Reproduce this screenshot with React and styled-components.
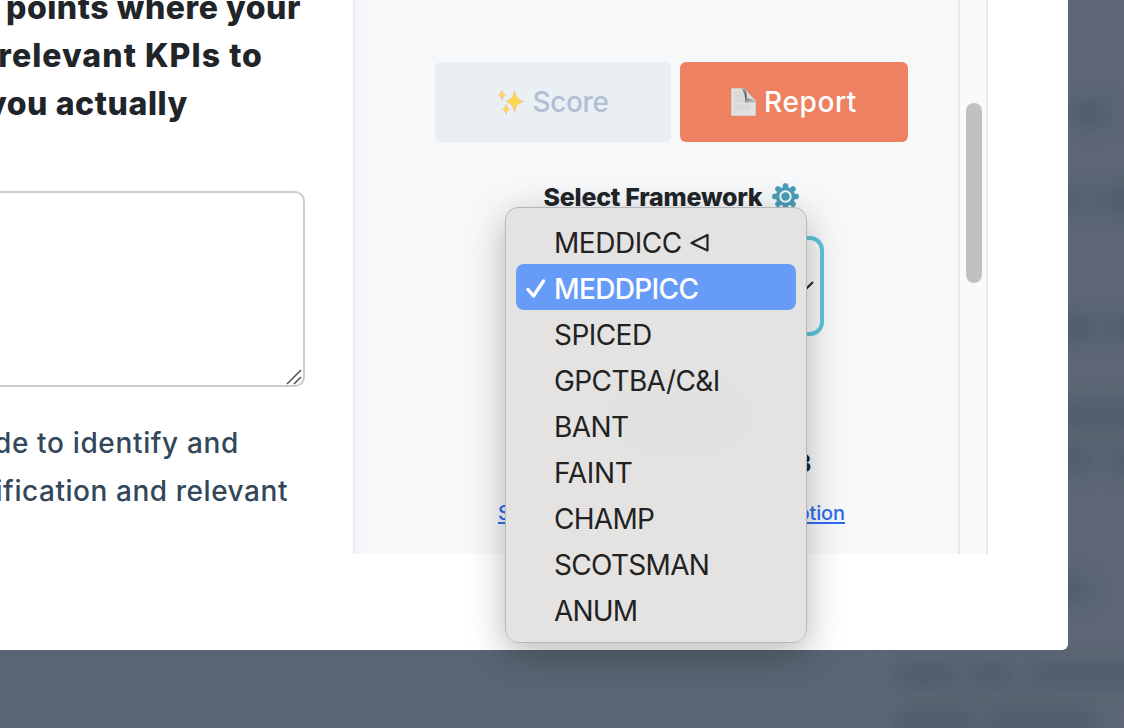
import React from "react";
import styled, { createGlobalStyle, css } from "styled-components";

const Global = createGlobalStyle`
  * { box-sizing: border-box; }
  body { margin: 0; font-family: Inter, "Noto Sans", sans-serif; }
`;

const Page = styled.main`
  position: relative;
  width: 1124px;
  height: 728px;
  overflow: hidden;
  background: #5c6674;
`;

const Smudge = styled.span`
  position: absolute;
  left: ${(p) => p.$x}px;
  top: ${(p) => p.$y}px;
  width: ${(p) => p.$w}px;
  height: ${(p) => p.$h || 20}px;
  border-radius: 10px;
  background: ${(p) => p.$color || "#4d5a68"};
  filter: blur(10px);
`;

const Modal = styled.section`
  position: relative;
  display: grid;
  grid-template-columns: 353px 635px;
  width: 1068px;
  height: 650px;
  background: #fff;
  border-radius: 0 0 6px 0;
`;

const Article = styled.div`
  display: flex;
  flex-direction: column;
  overflow: hidden;
`;

const Heading = styled.h2`
  margin: -16px 0 0;
  height: 144px;
  color: #212529;
  font-size: 32px;
  font-weight: 800;
  line-height: 48px;
`;

const Copy = styled.p`
  margin: 32px 0 0;
  color: #33475b;
  font-size: 28px;
  font-weight: 450;
  line-height: 48px;
`;

const Line = styled.span`
  display: flex;
  justify-content: flex-end;
  width: ${(p) => p.$end}px;
  white-space: pre;
  letter-spacing: ${(p) => p.$track}px;
`;

const AnswerBox = styled.div`
  display: flex;
  justify-content: flex-end;
  align-items: flex-end;
  width: 325px;
  height: 196px;
  margin: 63px 0 0 -20px;
  border: 2px solid #ccc;
  border-radius: 10px;
`;

const Panel = styled.aside`
  display: flex;
  height: 554px;
  border-left: 2px solid #e9ebee;
  background: linear-gradient(90deg, #f1f3f6, #f7f8fa 8px);
`;

const PanelBody = styled.div`
  display: flex;
  flex-direction: column;
  align-items: center;
  width: 603px;
  padding: 62px 0 0 30px;
`;

const Track = styled.div`
  width: 30px;
  padding: 103px 0 0 6px;
  border: solid #e8e8e8;
  border-width: 0 2px;
  background: #fafafa;
`;

const Thumb = styled.div`
  width: 16px;
  height: 180px;
  border-radius: 8px;
  background: #c1c1c1;
`;

const Actions = styled.div`
  display: flex;
  gap: 9px;
`;

const Button = styled.button`
  display: flex;
  align-items: center;
  justify-content: center;
  gap: 8px;
  width: ${(p) => (p.$primary ? 228 : 236)}px;
  height: 80px;
  padding: 0;
  border: 0;
  border-radius: 6px;
  background: ${(p) => (p.$primary ? "#ee8162" : "#eaeff3")};
  color: ${(p) => (p.$primary ? "#fff" : "#b1bfd3")};
  font: 550 28px Inter, sans-serif;
  letter-spacing: ${(p) => (p.$primary ? 0.6 : -0.4)}px;
`;

const FrameworkLabel = styled.div`
  display: flex;
  align-items: center;
  gap: 10px;
  height: 36px;
  margin: 37px 0 0 0;
  color: #212529;
  font-size: 25px;
  font-weight: 800;
  letter-spacing: -0.25px;
  white-space: nowrap;

  svg {
    margin-top: -2px;
  }
`;

const Select = styled.div`
  display: flex;
  align-items: center;
  justify-content: flex-end;
  width: 306px;
  height: 100px;
  margin: 21px 0 0 -2px;
  padding-right: 6px;
  border: 4px solid #5cc6da;
  border-radius: 14px;
  background: #f8f8f9;
`;

const Version = styled.div`
  width: 280px;
  margin-top: 112px;
  color: #212529;
  font-size: 24px;
  font-weight: 600;
  line-height: 32px;
  text-align: right;
`;

const Link = styled.a`
  display: flex;
  justify-content: space-between;
  width: 347px;
  margin-top: 17px;
  color: #2f6bf0;
  font-size: 20px;
  font-weight: 500;
  line-height: 32px;
  letter-spacing: -0.1px;
  text-decoration: underline;
  text-decoration-thickness: 2px;
  text-underline-offset: 2px;
`;

const Menu = styled.ul`
  position: absolute;
  left: 505px;
  top: 207px;
  width: 302px;
  height: 436px;
  margin: 0;
  padding: 10px 10px;
  list-style: none;
  border: 1px solid #b5b6b7;
  border-radius: 13px;
  background: radial-gradient(ellipse 110px 65px at 175px 207px, #dfe2e1, #e4e3e1);
  box-shadow: 0 10px 36px rgba(0, 0, 0, 0.28);
`;

const Option = styled.li`
  display: flex;
  align-items: center;
  height: 46px;
  padding-top: 3px;
  padding-left: ${(p) => (p.$selected ? 10 : 38)}px;
  border-radius: 8px;
  color: #222;
  font-size: 28px;
  letter-spacing: ${(p) => p.$track}px;
  white-space: pre;
  ${(p) => p.$selected && css`
    background: #669bf8;
    color: #fff;
    font-weight: 450;
  `}
`;

const Check = styled.svg`
  flex: none;
  width: 20px;
  height: 22px;
  margin-right: 8px;
`;

const Arrow = styled.svg`
  width: 19px;
  height: 20px;
  margin-left: 8px;
`;

const Sparkles = () => (
  <svg width="27" height="27" viewBox="0 0 27 27">
    <g fill="#fbd64f" stroke="#eec083" strokeWidth=".6">
      <path d="M16.500 1.500Q17.300 10.500 25.500 12.500Q17.300 14.500 16.500 23.500Q15.200 14.500 8 12.500Q15.200 10.500 16.500 1.500Z" />
      <path d="M4 1Q4.600 5.300 7.500 6Q4.600 7 4 11.500Q3.400 7 .8 6Q3.400 5.300 4 1Z" />
      <path d="M8 15Q8.600 19.500 11.500 20.300Q8.600 21.200 8 25.500Q7.400 21.200 4.600 20.300Q7.400 19.500 8 15Z" />
    </g>
  </svg>
);

const PageIcon = () => (
  <svg width="25" height="28" viewBox="0 0 25 28">
    <defs>
      <linearGradient id="fold" x1="0" y1="0" x2=".5" y2="1">
        <stop offset="0" stopColor="#a9acab" />
        <stop offset=".6" stopColor="#555958" />
        <stop offset="1" stopColor="#b5b7b6" />
      </linearGradient>
    </defs>
    <path d="M.5.5H13L24.500 13V27.500H.5Z" fill="#e3e1df" stroke="#d3cdc8" />
    <path d="M3 4H11M3 6H12M3 8H13M3 10H14M3 12H14M3 14H15M3 17H20M3 19H20M3 21H18M3 24H8" stroke="#cbcbca" strokeWidth=".8" />
    <path d="M10 .5H14L24.500 13V14.500H14Q15 6 10 .5Z" fill="url(#fold)" />
    <path d="M14 .5L24.500 13Q20 10 15.500 10.500Q16.500 5 14 .5Z" fill="#d9dad9" />
  </svg>
);

const Gear = () => (
  <svg width="27" height="27" viewBox="-13.500 -13.500 27 27">
    <g fill="#479eb7">
      {[0, 45, 90, 135].map((a) => (
        <rect key={a} x="-2.700" y="-13.300" width="5.400" height="26.600" rx="2" transform={`rotate(${a})`} />
      ))}
      <circle r="9.700" />
    </g>
    <circle r="5.200" fill="none" stroke="#f7f8fa" strokeWidth="2" />
  </svg>
);

const options = [
  { name: "MEDDICC", arrow: true, track: -0.45 },
  { name: "MEDDPICC", selected: true, track: -0.65 },
  { name: "SPICED", track: -0.55 },
  { name: "GPCTBA/C&I", track: -0.6 },
  { name: "BANT", track: -0.6 },
  { name: "FAINT", track: -0.3 },
  { name: "CHAMP", track: -0.7 },
  { name: "SCOTSMAN", track: -0.7 },
  { name: "ANUM", track: -0.8 },
];

export default function App() {
  return (
    <Page>
      <Global />
      <Smudge $x={1072} $y={103} $w={38} />
      <Smudge $x={1050} $y={190} $w={32} />
      <Smudge $x={1098} $y={190} $w={50} />
      <Smudge $x={1050} $y={318} $w={45} />
      <Smudge $x={1108} $y={318} $w={40} />
      <Smudge $x={1050} $y={403} $w={90} />
      <Smudge $x={1050} $y={449} $w={42} />
      <Smudge $x={1110} $y={449} $w={40} />
      <Smudge $x={1050} $y={580} $w={37} />
      <Smudge $x={895} $y={665} $w={62} />
      <Smudge $x={970} $y={665} $w={42} />
      <Smudge $x={1030} $y={665} $w={110} />
      <Smudge $x={895} $y={712} $w={80} />
      <Smudge $x={985} $y={712} $w={112} />
      <Smudge $x={-40} $y={640} $w={900} $h={120} $color="#596573" />
      <Modal>
        <Article>
          <Heading>
            <Line $end={301} $track={0.55}>points where your</Line>
            <Line $end={263} $track={1.05}>relevant KPIs to</Line>
            <Line $end={188} $track={0.6}>you actually</Line>
          </Heading>
          <AnswerBox>
            <svg width="17" height="17" viewBox="0 0 17 17" fill="none" stroke="#555" strokeWidth="1.600">
              <path d="M1 16L15 2M8 16L15 9" />
            </svg>
          </AnswerBox>
          <Copy>
            <Line $end={239} $track={0.65}>de to identify and</Line>
            <Line $end={288} $track={0.55}>ification and relevant</Line>
          </Copy>
        </Article>
        <Panel>
          <PanelBody>
            <Actions>
              <Button><Sparkles />Score</Button>
              <Button $primary><PageIcon />Report</Button>
            </Actions>
            <FrameworkLabel>Select Framework<Gear /></FrameworkLabel>
            <Select>
              <svg width="18" height="11" viewBox="0 0 18 11" fill="none" stroke="#222" strokeWidth="2">
                <path d="M1 1L9 9L17 1" />
              </svg>
            </Select>
            <Version>3</Version>
            <Link><span>S</span><span>ption</span></Link>
          </PanelBody>
          <Track><Thumb /></Track>
        </Panel>
        <Menu>
          {options.map((o) => (
            <Option key={o.name} $selected={o.selected} $track={o.track}>
              {o.selected && (
                <Check viewBox="0 0 20 22" fill="none" stroke="#fff" strokeWidth="3.400" strokeLinecap="round" strokeLinejoin="round">
                  <path d="M2 11.500L7.500 18L17.500 3" />
                </Check>
              )}
              {o.name}
              {o.arrow && (
                <Arrow viewBox="0 0 19 20" fill="none" stroke="#222" strokeWidth="2.200" strokeLinejoin="round">
                  <path d="M1.500 10L17.500 2V17.500Z" />
                </Arrow>
              )}
            </Option>
          ))}
        </Menu>
      </Modal>
    </Page>
  );
}
